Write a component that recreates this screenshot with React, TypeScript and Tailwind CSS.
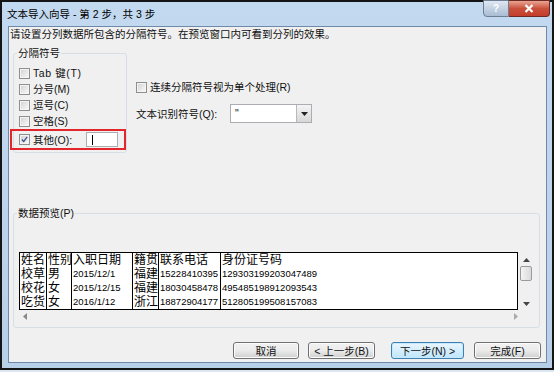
import type { ReactNode } from 'react';

const FONT = '"Liberation Sans", "Noto Sans CJK SC", sans-serif';

function Check({ checked = false }: { checked?: boolean }) {
  return (
    <span className="w-[11px] h-[11px] shrink-0 border border-[#8e8f8f] bg-white flex items-center justify-center">
      <span className="w-[9px] h-[9px] border border-[#f4f4f4] bg-gradient-to-br from-[#d6d6d6] to-[#f7f7f7] flex items-center justify-center">
        {checked && (
          <svg width="9" height="9" viewBox="0 0 9 9">
            <path d="M1 4.5 L3.5 7 L8 1" stroke="#3b4f8a" strokeWidth="1.6" fill="none" />
          </svg>
        )}
      </span>
    </span>
  );
}

function Btn({ w, def = false, children }: { w: string; def?: boolean; children: ReactNode }) {
  return (
    <div
      className={`${w} h-[17px] rounded-[3px] border flex items-center justify-center text-[10.5px] leading-[14px] text-[#111] ${
        def
          ? 'border-[#3c7fb1] bg-gradient-to-b from-[#eaf6fd] to-[#bee6fd] shadow-[inset_0_0_0_1px_#c8e8fb]'
          : 'border-[#707070] bg-gradient-to-b from-[#f2f2f2] via-[#ebebeb] to-[#cfcfcf] shadow-[inset_0_0_0_1px_#fcfcfc]'
      }`}
    >
      {children}
    </div>
  );
}

export default function App() {
  const cols = ['w-[27px]', 'w-[25px]', 'w-[61px]', 'w-[26px]', 'w-[62px]', 'flex-1'];
  const rows = [
    ['姓名', '性别', '入职日期', '籍贯', '联系电话', '身份证号码'],
    ['校草', '男', '2015/12/1', '福建', '15228410395', '129303199203047489'],
    ['校花', '女', '2015/12/15', '福建', '18030458478', '495485198912093543'],
    ['吃货', '女', '2016/1/12', '浙江', '18872904177', '512805199508157083'],
  ];
  const cbs = ['Tab 键(T)', '分号(M)', '逗号(C)', '空格(S)'];

  return (
    <div className="w-[554px] h-[372px] bg-[#dce6f2] overflow-hidden" style={{ fontFamily: FONT }}>
      <div className="h-[370px] border-2 border-[#151515] bg-gradient-to-b from-[#c3d9f0] to-[#b8cfe8] flex flex-col">
        {/* title bar */}
        <div className="h-[24px] flex items-start justify-between shrink-0">
          <div className="pl-[5px] pt-[5px] text-[10.5px] leading-[14px] text-black">文本导入向导 - 第 2 步，共 3 步</div>
          <div className="flex mr-[2px] -mt-[2px]">
            <div className="w-[26px] h-[17px] rounded-bl-[4px] border border-[#6d7e93] bg-gradient-to-b from-[#dfe8f2] to-[#a9bcd4] flex items-center justify-center text-[10px] font-bold text-white leading-none">
              ?
            </div>
            <div className="w-[41px] h-[17px] rounded-br-[4px] border border-l-0 border-[#6e2a22] bg-gradient-to-b from-[#e8a493] via-[#c9503b] to-[#c33e2c] flex items-center justify-center">
              <svg width="10" height="9" viewBox="0 0 10 9">
                <path d="M1.5 1 L8.5 8 M8.5 1 L1.5 8" stroke="#fff" strokeWidth="2.2" />
              </svg>
            </div>
          </div>
        </div>

        {/* client */}
        <div className="flex-1 ml-[6px] mr-[5px] mb-[5px] border border-[#6f8aa8] bg-[#f0f0f0] flex flex-col text-[10.5px] leading-[14px] text-[#111]">
          <div className="pl-[1px]">请设置分列数据所包含的分隔符号。在预览窗口内可看到分列的效果。</div>

          <div className="flex mt-[5px] pl-[4px]">
            <fieldset className="w-[113px] border border-[#d5dfe5] rounded-[3px] pb-[2px]">
              <legend className="ml-[3px] px-[1px]">分隔符号</legend>
              <div className="mt-[5px] flex flex-col">
                {cbs.map((c) => (
                  <div key={c} className="h-[16px] pl-[5px] flex items-center gap-[3px]">
                    <Check />
                    <span className={c.startsWith('Tab') ? 'tracking-[0.6px]' : ''}>{c}</span>
                  </div>
                ))}
                <div className="h-[21px] w-[116px] -ml-[4px] border-2 border-[#e3262c] pl-[7px] flex items-center gap-[3px]">
                  <Check checked />
                  <span>其他(O):</span>
                  <div className="ml-[11px] w-[32px] h-[15px] bg-white border border-[#abadb3] flex items-center pl-[5px]">
                    <div className="w-px h-[10px] bg-black" />
                  </div>
                </div>
              </div>
            </fieldset>

            <div className="ml-[9px] flex flex-col">
              <div className="mt-[33px] h-[16px] flex items-center gap-[3px]">
                <Check />
                <span>连续分隔符号视为单个处理(R)</span>
              </div>
              <div className="mt-[9px] flex items-center">
                <span className="w-[94px]">文本识别符号(Q):</span>
                <div className="w-[82px] h-[19px] bg-white border border-[#abadb3] flex">
                  <div className="flex-1 pl-[4px] leading-[16px]">"</div>
                  <div className="w-[15px] border-l border-[#b8b8b8] bg-gradient-to-b from-[#f4f4f4] to-[#d7d7d7] flex items-center justify-center">
                    <svg width="7" height="4" viewBox="0 0 7 4">
                      <path d="M0 0 H7 L3.5 4 Z" fill="#222" />
                    </svg>
                  </div>
                </div>
              </div>
            </div>
          </div>

          {/* preview */}
          <div className="mt-[53px] pl-[4px] pr-[6px]">
            <fieldset className="border border-[#d5dfe5] rounded-[3px] pb-[5px]">
              <legend className="ml-[3px] px-[1px]">数据预览(P)</legend>
              <div className="mt-[32px] pl-[5px] pr-[6px] flex">
                <div className="flex-1 h-[58px] bg-white border border-black flex overflow-hidden">
                  {cols.map((w, ci) => (
                    <div key={ci} className={`${w} ${ci < 5 ? 'border-r border-black' : ''} flex flex-col`}>
                      {rows.map((r, ri) => {
                        const cjk = /[\u4e00-\u9fa5]/.test(r[ci]);
                        return (
                          <div
                            key={ri}
                            className={`h-[14px] pl-[1px] whitespace-nowrap leading-[14px] ${
                              cjk ? 'text-[12px]' : 'text-[9.5px]'
                            } text-black`}
                          >
                            {r[ci]}
                          </div>
                        );
                      })}
                    </div>
                  ))}
                </div>
                <div className="w-[14px] h-[58px] ml-[1px] bg-[#f0f0f0] flex flex-col items-center">
                  <svg className="mt-[6px]" width="7" height="4" viewBox="0 0 7 4">
                    <path d="M0 4 H7 L3.5 0 Z" fill="#444" />
                  </svg>
                  <div className="mt-[4px] w-[12px] h-[15px] rounded-[2px] border border-[#9a9a9a] bg-gradient-to-r from-[#f3f3f3] to-[#dadada]" />
                  <svg className="mt-[21px]" width="7" height="4" viewBox="0 0 7 4">
                    <path d="M0 0 H7 L3.5 4 Z" fill="#444" />
                  </svg>
                </div>
              </div>
              <div className="h-[12px] pl-[5px] pr-[21px] flex items-center justify-between">
                <svg className="ml-[4px]" width="4" height="7" viewBox="0 0 4 7">
                  <path d="M4 0 V7 L0 3.5 Z" fill="#888" />
                </svg>
                <svg width="4" height="7" viewBox="0 0 4 7">
                  <path d="M0 0 V7 L4 3.5 Z" fill="#aaa" />
                </svg>
              </div>
            </fieldset>
          </div>

          {/* buttons */}
          <div className="mt-[14px] flex justify-end pr-[5px]">
            <Btn w="w-[66px]">取消</Btn>
            <div className="ml-[9px]">
              <Btn w="w-[67px]">&lt; 上一步(B)</Btn>
            </div>
            <div className="ml-[16px]">
              <Btn w="w-[73px]" def>
                下一步(N) &gt;
              </Btn>
            </div>
            <div className="ml-[10px]">
              <Btn w="w-[67px]">完成(F)</Btn>
            </div>
          </div>
        </div>
      </div>
    </div>
  );
}
